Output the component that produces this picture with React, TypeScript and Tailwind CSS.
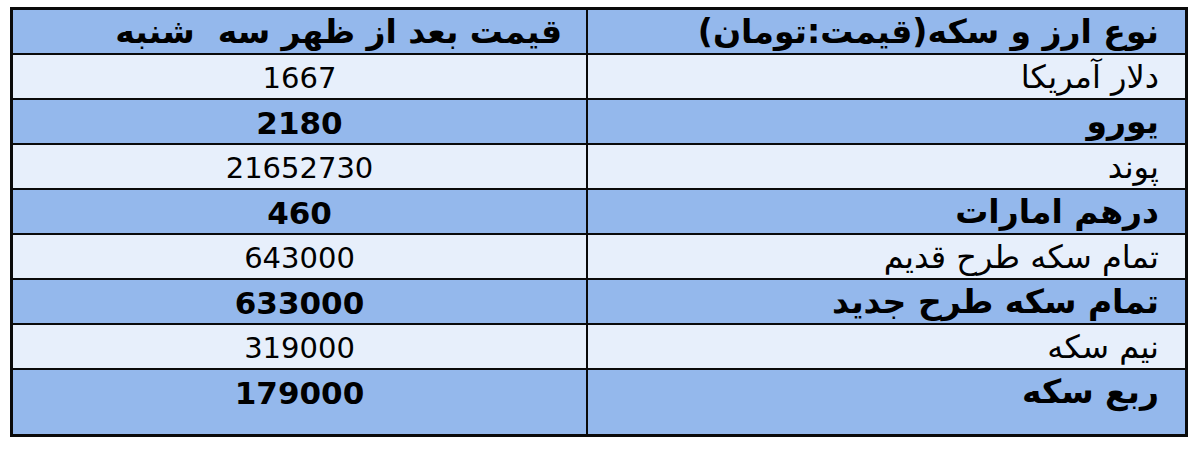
import React from "react"

interface Row {
  name: string
  price: string
  bold: boolean
}

const rows: Row[] = [
  { name: "دلار آمریکا", price: "1667", bold: false },
  { name: "یورو", price: "2180", bold: true },
  { name: "پوند", price: "21652730", bold: false },
  { name: "درهم امارات", price: "460", bold: true },
  { name: "تمام سکه طرح قدیم", price: "643000", bold: false },
  { name: "تمام سکه طرح جدید", price: "633000", bold: true },
  { name: "نیم سکه", price: "319000", bold: false },
  { name: "ربع سکه", price: "179000", bold: true },
]

export default function App() {
  return (
    <div
      className="w-[1200px] h-[455px] bg-white pl-[10px] pt-[7px] text-black"
      style={{ fontFamily: '"DejaVu Sans", Tahoma, sans-serif' }}
    >
      <div className="w-[1178px] border-[3px] border-[#0a0a0a]">
        <div className="grid grid-cols-[573px_2px_1fr] h-[45px] border-b-2 border-[#0a0a0a] bg-[#94b8ec]">
          <div dir="rtl" className="pr-[24px] pt-[5px] text-[33px] font-bold leading-[34px] whitespace-pre">
            قیمت بعد از ظهر سه  شنبه
          </div>
          <div className="bg-[#0a0a0a]" />
          <div dir="rtl" className="pr-[26px] pt-[5px] text-[33px] font-bold leading-[34px]">
            نوع ارز و سکه(قیمت:تومان)
          </div>
        </div>

        {rows.map((row, i) => {
          const last = i === rows.length - 1
          return (
            <div
              key={row.name}
              className={`grid grid-cols-[573px_2px_1fr] ${last ? "h-[64px]" : "h-[45px] border-b-2 border-[#0a0a0a]"} ${row.bold ? "bg-[#94b8ec]" : "bg-[#e7effb]"}`}
            >
              <div
                className={`text-center pt-[6px] leading-[34px] ${row.bold ? "text-[31px] font-bold" : "text-[29px]"}`}
              >
                {row.price}
              </div>
              <div className="bg-[#0a0a0a]" />
              <div
                dir="rtl"
                className={`pr-[26px] pt-[5px] leading-[34px] ${row.bold ? "text-[33px] font-bold" : "text-[32px]"}`}
              >
                {row.name}
              </div>
            </div>
          )
        })}
      </div>
    </div>
  )
}
